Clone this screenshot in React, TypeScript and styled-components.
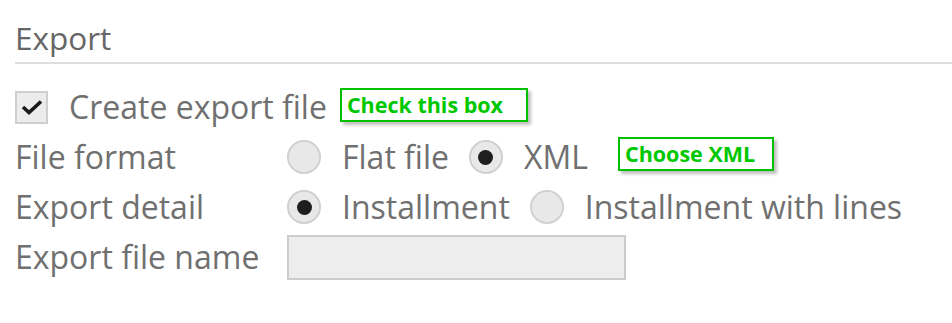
import styled, { createGlobalStyle } from 'styled-components'

const GlobalStyle = createGlobalStyle`
    html, body {
        margin: 0;
        padding: 0;
        background: #ffffff;
    }
    body {
        font-family: "Open Sans", "Noto Sans", sans-serif;
        color: #707070;
    }
`

type Choice = { label: string; checked?: boolean }

const rows: { label: string; choices: Choice[]; hint?: string }[] = [
    {
        label: 'File format',
        choices: [{ label: 'Flat file' }, { label: 'XML', checked: true }],
        hint: 'Choose XML',
    },
    {
        label: 'Export detail',
        choices: [{ label: 'Installment', checked: true }, { label: 'Installment with lines' }],
    },
]

export default function App() {
    return (
        <>
            <GlobalStyle />
            <Panel>
                <Heading>Export</Heading>
                <Form>
                    <CheckRow>
                        <CheckBox>
                            <svg width="22" height="16" viewBox="0 0 22 16">
                                <path d="M2 8 L8 13.5 L20 2.5" fill="none" stroke="#1a1a1a" strokeWidth="3.6" />
                            </svg>
                        </CheckBox>
                        <Text>Create export file</Text>
                        <Hint $left={-8} $top={6} $width={188}>Check this box</Hint>
                    </CheckRow>

                    {rows.map((row) => (
                        <Row key={row.label}>
                            <Label>{row.label}</Label>
                            <Options>
                                {row.choices.map((choice) => (
                                    <Option key={choice.label}>
                                        <Radio $checked={choice.checked} />
                                        <Text>{choice.label}</Text>
                                    </Option>
                                ))}
                                {row.hint && <Hint $left={10} $top={0} $width={156}>{row.hint}</Hint>}
                            </Options>
                        </Row>
                    ))}

                    <Row>
                        <Label>Export file name</Label>
                        <Input />
                    </Row>
                </Form>
            </Panel>
        </>
    )
}

const Panel = styled.div`
    padding: 18px 0 0 15px;
    width: 937px;
`

const Heading = styled.h2`
    margin: 0;
    font-weight: 400;
    font-size: 31.5px;
    line-height: 40px;
    padding-bottom: 4px;
    color: #666666;
    border-bottom: 2px solid #dedede;
`

const Form = styled.div`
    display: flex;
    flex-direction: column;
    padding-top: 18px;
`

const Row = styled.div`
    display: flex;
    align-items: center;
    height: 50px;
`

const CheckRow = styled(Row)`
    gap: 21px;
`

const Label = styled.div`
    width: 272px;
    flex-shrink: 0;
    font-size: 32px;
    line-height: 40px;
    white-space: nowrap;
`

const Text = styled.span`
    font-size: 32px;
    line-height: 40px;
    white-space: nowrap;
`

const Options = styled.div`
    display: flex;
    align-items: center;
    gap: 20px;
`

const Option = styled.label`
    display: flex;
    align-items: center;
    gap: 21px;
`

const CheckBox = styled.span`
    width: 33px;
    height: 33px;
    box-sizing: border-box;
    border: 2px solid #cfcfcf;
    background: #ececec;
    display: flex;
    align-items: center;
    justify-content: center;
`

const Radio = styled.span<{ $checked?: boolean }>`
    width: 34px;
    height: 34px;
    flex-shrink: 0;
    box-sizing: border-box;
    border-radius: 50%;
    border: 2px solid #d0d0d0;
    background: radial-gradient(circle, #e8e8e8 60%, #f4f4f4 100%);
    display: flex;
    align-items: center;
    justify-content: center;

    &::after {
        content: '';
        width: 15px;
        height: 15px;
        border-radius: 50%;
        background: #1e1e1e;
        display: ${({ $checked }) => ($checked ? 'block' : 'none')};
    }
`

const Hint = styled.span<{ $left: number; $top: number; $width: number }>`
    margin-left: ${({ $left }) => $left}px;
    margin-top: ${({ $top }) => $top}px;
    width: ${({ $width }) => $width}px;
    align-self: flex-start;
    flex-shrink: 0;
    box-sizing: border-box;
    height: 34px;
    padding: 0 0 0 5px;
    border: 2px solid #00c000;
    background: #ffffff;
    box-shadow: 3px 3px 3px rgba(0, 0, 0, 0.25);
    color: #00c800;
    font-family: "Open Sans", "Noto Sans", sans-serif;
    font-weight: 700;
    font-size: 21.5px;
    line-height: 30px;
    white-space: nowrap;
`

const Input = styled.div`
    width: 339px;
    height: 45px;
    box-sizing: border-box;
    border: 2px solid #cccccc;
    background: #ededed;
`
